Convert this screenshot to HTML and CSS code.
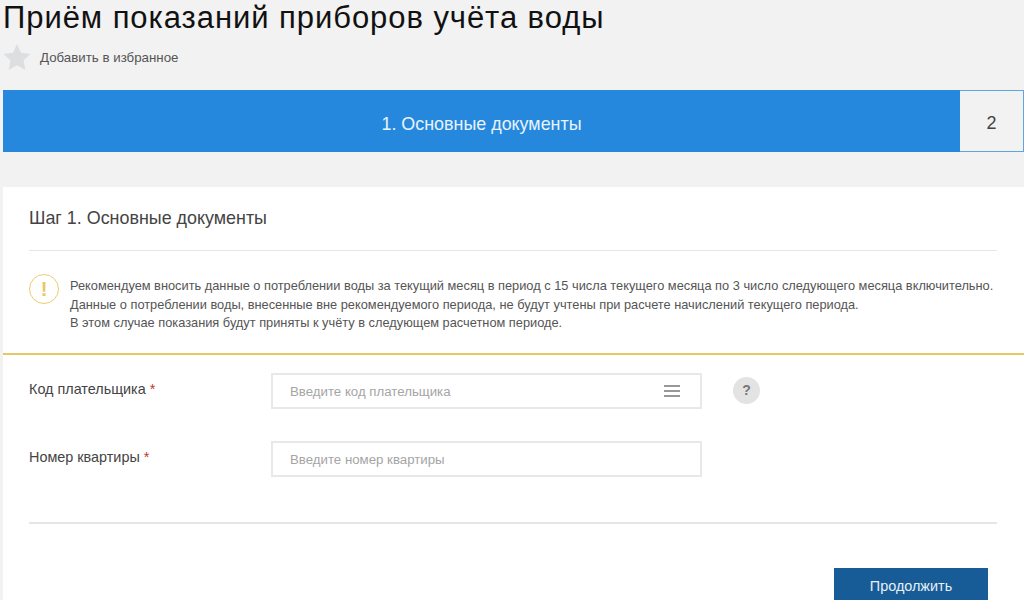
FILE: index.html
```html
<!DOCTYPE html>
<html lang="ru">
<head>
<meta charset="utf-8">
<title>Приём показаний приборов учёта воды</title>
<link rel="stylesheet" href="styles.css">
</head>
<body>
<div class="page">
  <h1 class="title">Приём показаний приборов учёта воды</h1>
  <div class="fav">
    <svg class="star" viewBox="0 0 28 28" width="28" height="28"><path d="M14 1l4 8.8 9.5 1.1-7 6.6 1.9 9.5L14 22.300l-8.400 4.700 1.900-9.500-7-6.600L10 9.800z" fill="#dcdee0"/></svg>
    <span>Добавить в избранное</span>
  </div>
  <div class="steps">
    <div class="step-active">1. Основные документы</div>
    <div class="step-next">2</div>
  </div>
  <main class="card">
    <h2 class="card-title">Шаг 1. Основные документы</h2>
    <div class="notice">
      <div class="notice-icon">!</div>
      <p class="notice-text">Рекомендуем вносить данные о потреблении воды за текущий месяц в период с 15 числа текущего месяца по 3 число следующего месяца включительно.<br>Данные о потреблении воды, внесенные вне рекомендуемого периода, не будут учтены при расчете начислений текущего периода.<br>В этом случае показания будут приняты к учёту в следующем расчетном периоде.</p>
    </div>
    <form class="form">
      <div class="row">
        <label class="label">Код плательщика <span class="req">*</span></label>
        <div class="field">
          <span class="ph">Введите код плательщика</span>
          <svg class="menu" viewBox="0 0 16 12" width="16" height="12"><path d="M0 1h16M0 6h16M0 11h16" stroke="#777" stroke-width="1.400" fill="none"/></svg>
        </div>
        <div class="help">?</div>
      </div>
      <div class="row">
        <label class="label">Номер квартиры <span class="req">*</span></label>
        <div class="field"><span class="ph">Введите номер квартиры</span></div>
      </div>
    </form>
    <div class="actions">
      <button class="btn" type="button">Продолжить</button>
    </div>
  </main>
</div>
</body>
</html>
```

FILE: styles.css
```css
html, body {
  margin: 0;
  height: 600px;
  overflow: hidden;
  background: #f2f2f2;
  font-family: "Liberation Sans", Arial, sans-serif;
  color: #444;
}
.page {
  padding-left: 3px;
  display: flex;
  flex-direction: column;
}
.title {
  margin: 0;
  height: 38px;
  font-size: 31px;
  line-height: 36px;
  font-weight: 400;
  letter-spacing: 0.94px;
  color: #111;
}
.fav {
  display: flex;
  align-items: center;
  height: 38px;
  font-size: 13.300px;
  color: #555;
}
.star {
  margin-right: 9px;
}
.steps {
  margin-top: 14px;
  height: 62px;
  display: flex;
}
.step-active {
  flex: 1;
  background: #2588dd;
  color: #e8f3fc;
  font-size: 17.900px;
  padding-top: 6px;
  box-sizing: border-box;
  display: flex;
  align-items: center;
  justify-content: center;
}
.step-next {
  width: 64px;
  box-sizing: border-box;
  border: 1px solid #5fa5e0;
  border-left: 0;
  padding-top: 5px;
  font-size: 18px;
  color: #444;
  display: flex;
  align-items: center;
  justify-content: center;
}
.card {
  margin-top: 35px;
  background: #fff;
}
.card-title {
  margin: 0 27px 0 26px;
  height: 64px;
  box-sizing: border-box;
  border-bottom: 1px solid #e6e6e6;
  font-size: 17.900px;
  line-height: 63px;
  font-weight: 400;
  color: #444;
}
.notice {
  display: flex;
  height: 104px;
  box-sizing: border-box;
  padding: 23px 26px 0;
  border-bottom: 2px solid #e8c766;
}
.notice-icon {
  flex: none;
  width: 28px;
  height: 28px;
  border: 1px solid #eccb70;
  border-radius: 50%;
  color: #ecc660;
  font-size: 20px;
  font-weight: 700;
  line-height: 28px;
  text-align: center;
  margin-right: 11px;
}
.notice-text {
  margin: 3px 0 0;
  font-size: 12.800px;
  line-height: 18.500px;
  color: #555;
  white-space: nowrap;
}
.form {
  padding: 18px 26px 0;
  height: 167px;
  box-sizing: border-box;
  margin-right: 1px;
  display: flex;
  flex-direction: column;
  gap: 32px;
}
.row {
  display: flex;
  align-items: flex-start;
  height: 36px;
}
.label {
  width: 242px;
  font-size: 14.400px;
  line-height: 32px;
  color: #444;
}
.req {
  color: #c0392b;
}
.field {
  width: 431px;
  height: 36px;
  box-sizing: border-box;
  border: 2px solid #e8e8e8;
  padding: 0 20px 0 17px;
  display: flex;
  align-items: center;
  justify-content: space-between;
}
.ph {
  font-size: 13.250px;
  color: #a5a5a5;
}
.help {
  width: 27px;
  height: 27px;
  margin: 4px 0 0 31px;
  border-radius: 50%;
  background: #e3e3e3;
  color: #777;
  font-size: 14px;
  font-weight: 700;
  line-height: 27px;
  text-align: center;
}
.actions {
  margin: 0 27px 0 26px;
  border-top: 2px solid #e6e6e6;
  display: flex;
  justify-content: flex-end;
  padding: 44px 9px 0 0;
}
.btn {
  width: 154px;
  height: 40px;
  border: 0;
  background: #175c97;
  color: #e8f0f7;
  font-family: inherit;
  font-size: 14.400px;
  padding: 0 0 4px;
}
```
